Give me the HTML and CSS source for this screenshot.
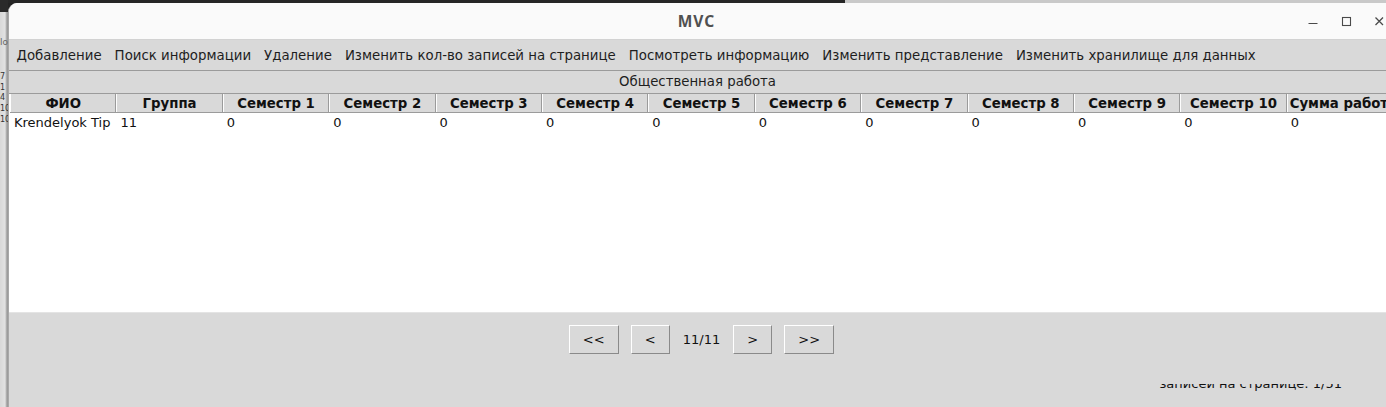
FILE: index.html
```html
<!DOCTYPE html>
<html lang="ru">
<head>
<meta charset="utf-8">
<title>MVC</title>
<link rel="stylesheet" href="styles.css">
</head>
<body>
<div class="screen">
  <div class="side">
    <div class="side-top"></div>
    <div class="side-body">
      <span class="side-lo">lo</span>
      <span class="side-num n1">7</span>
      <span class="side-num">1</span>
      <span class="side-num">4</span>
      <span class="side-num">10</span>
      <span class="side-num">10</span>
    </div>
  </div>
  <div class="main">
    <div class="topband"><div class="tb-dark"></div><div class="tb-light"></div></div>
    <div class="window">
      <div class="titlebar">
        <span class="title">MVC</span>
        <div class="controls">
          <svg class="ctl" width="12" height="12" viewBox="0 0 12 12"><line x1="1.5" y1="8.5" x2="10.5" y2="8.5" stroke="#4a4a4a" stroke-width="1.2"/></svg>
          <svg class="ctl" width="12" height="12" viewBox="0 0 12 12"><rect x="2.5" y="2.5" width="8" height="8" fill="none" stroke="#4a4a4a" stroke-width="1.1"/></svg>
          <svg class="ctl" width="12" height="12" viewBox="0 0 12 12"><path d="M2.5 2.5 L10 10 M10 2.5 L2.5 10" stroke="#4a4a4a" stroke-width="1.3"/></svg>
        </div>
      </div>
      <div class="menubar">
        <span class="mi">Добавление</span>
        <span class="mi">Поиск информации</span>
        <span class="mi">Удаление</span>
        <span class="mi">Изменить кол-во записей на странице</span>
        <span class="mi">Посмотреть информацию</span>
        <span class="mi">Изменить представление</span>
        <span class="mi">Изменить хранилище для данных</span>
      </div>
      <div class="caption">Общественная работа</div>
      <div class="tablewrap">
        <div class="grid head">
          <div class="th">ФИО</div>
          <div class="th">Группа</div>
          <div class="th">Семестр 1</div>
          <div class="th">Семестр 2</div>
          <div class="th">Семестр 3</div>
          <div class="th">Семестр 4</div>
          <div class="th">Семестр 5</div>
          <div class="th">Семестр 6</div>
          <div class="th">Семестр 7</div>
          <div class="th">Семестр 8</div>
          <div class="th">Семестр 9</div>
          <div class="th">Семестр 10</div>
          <div class="th last">Сумма работ</div>
        </div>
        <div class="grid row">
          <div class="td">Krendelyok Tip</div>
          <div class="td">11</div>
          <div class="td">0</div>
          <div class="td">0</div>
          <div class="td">0</div>
          <div class="td">0</div>
          <div class="td">0</div>
          <div class="td">0</div>
          <div class="td">0</div>
          <div class="td">0</div>
          <div class="td">0</div>
          <div class="td">0</div>
          <div class="td">0</div>
        </div>
      </div>
      <div class="bottom">
        <div class="pager">
          <button class="btn wide">&lt;&lt;</button>
          <button class="btn">&lt;</button>
          <span class="pageno">11/11</span>
          <button class="btn">&gt;</button>
          <button class="btn wide">&gt;&gt;</button>
        </div>
        <div class="status">
          <div class="clip"><span class="status-text">записей на странице: 1/51</span></div>
        </div>
      </div>
    </div>
  </div>
</div>
</body>
</html>
```

FILE: styles.css
```css
* { box-sizing: border-box; }
html, body { margin: 0; padding: 0; }
body {
  width: 1386px;
  height: 407px;
  overflow: hidden;
  background: #232323;
  font-family: "DejaVu Sans", sans-serif;
  color: #1a1a1a;
}
.screen {
  display: flex;
  height: 407px;
}
.side {
  width: 8px;
  flex: none;
  display: flex;
  flex-direction: column;
  overflow: hidden;
}
.side-top {
  height: 12px;
  background: #2a2a2a;
}
.side-body {
  flex: 1;
  background: linear-gradient(to right, #d8d8d8 0, #e2e2e2 5px, #9c9c9c 7px);
  display: flex;
  flex-direction: column;
  font-size: 8px;
  line-height: 10.8px;
  color: #333;
  padding-top: 25px;
}
.side-lo { color: #666; font-size: 9px; }
.side-num.n1 { margin-top: 24px; }
.main {
  flex: 1;
  display: flex;
  flex-direction: column;
  min-width: 0;
}
.topband {
  height: 3px;
  display: flex;
  flex: none;
}
.tb-dark { width: 837px; background: #262626; }
.tb-light { flex: 1; background: #c9c9c9; }
.window {
  flex: 1;
  display: flex;
  flex-direction: column;
  background: #ffffff;
  border-top-left-radius: 9px;
  overflow: hidden;
  border-left: 1px solid #a8a8a8;
}
.titlebar {
  height: 37px;
  flex: none;
  background: #fafafa;
  border-bottom: 1px solid #d2d2d2;
  display: flex;
  align-items: center;
  justify-content: center;
  position: relative;
}
.title {
  font-family: "Noto Sans", "DejaVu Sans", sans-serif;
  font-weight: 700;
  font-size: 15.5px;
  color: #505050;
  letter-spacing: 1px;
  margin-left: -2px;
}
.controls {
  position: absolute;
  right: 1px;
  top: 12px;
  display: flex;
  gap: 21px;
}
.ctl { display: block; }
.menubar {
  height: 31px;
  flex: none;
  background: #d9d9d9;
  border-bottom: 1px solid #9b9b9b;
  display: flex;
  align-items: center;
  padding-left: 1px;
  font-size: 13.33px;
  white-space: nowrap;
}
.mi {
  padding: 0 6.5px;
  color: #1e1e1e;
}
.caption {
  height: 23px;
  flex: none;
  background: #d9d9d9;
  border-bottom: 1px solid #9b9b9b;
  text-align: center;
  font-size: 13.3px;
  line-height: 22px;
  color: #1e1e1e;
}
.tablewrap {
  flex: 1;
  background: #fff;
  padding-left: 1px;
  overflow: hidden;
  border-bottom: 1px solid #e4e4e4;
}
.grid {
  display: grid;
  grid-template-columns: repeat(13, 106.4px);
  white-space: nowrap;
}
.head {
  height: 19px;
  border-bottom: 1px solid #9b9b9b;
}
.th {
  background: #d9d9d9;
  border-left: 1px solid #fdfdfd;
  border-right: 1px solid #9b9b9b;
  font-weight: 700;
  font-size: 13.3px;
  line-height: 19px;
  text-align: center;
  color: #111;
  overflow: hidden;
}
.th.last { text-align: left; padding-left: 2px; }
.row { height: 19px; }
.td {
  font-size: 13px;
  line-height: 19px;
  padding-left: 4px;
  color: #111;
  overflow: hidden;
}
.bottom {
  height: 94px;
  flex: none;
  background: #d9d9d9;
  display: flex;
  flex-direction: column;
}
.pager {
  display: flex;
  justify-content: center;
  align-items: center;
  gap: 12px;
  margin-top: 12px;
  padding-left: 8px;
}
.btn {
  height: 29px;
  width: 39px;
  background: #d9d9d9;
  border: 1px solid;
  border-color: #ffffff #8a8a8a #8a8a8a #ffffff;
  font-family: "DejaVu Sans", sans-serif;
  font-size: 13px;
  color: #111;
  padding: 0;
}
.btn.wide { width: 50px; }
.pageno {
  font-size: 13px;
  color: #111;
  padding: 0 1px;
}
.status {
  display: flex;
  justify-content: flex-end;
  padding-right: 44px;
  margin-top: 30px;
}
.clip {
  height: 8px;
  overflow: hidden;
}
.status-text {
  display: block;
  font-size: 13px;
  line-height: 16px;
  margin-top: -8px;
  color: #111;
  white-space: nowrap;
}
```
